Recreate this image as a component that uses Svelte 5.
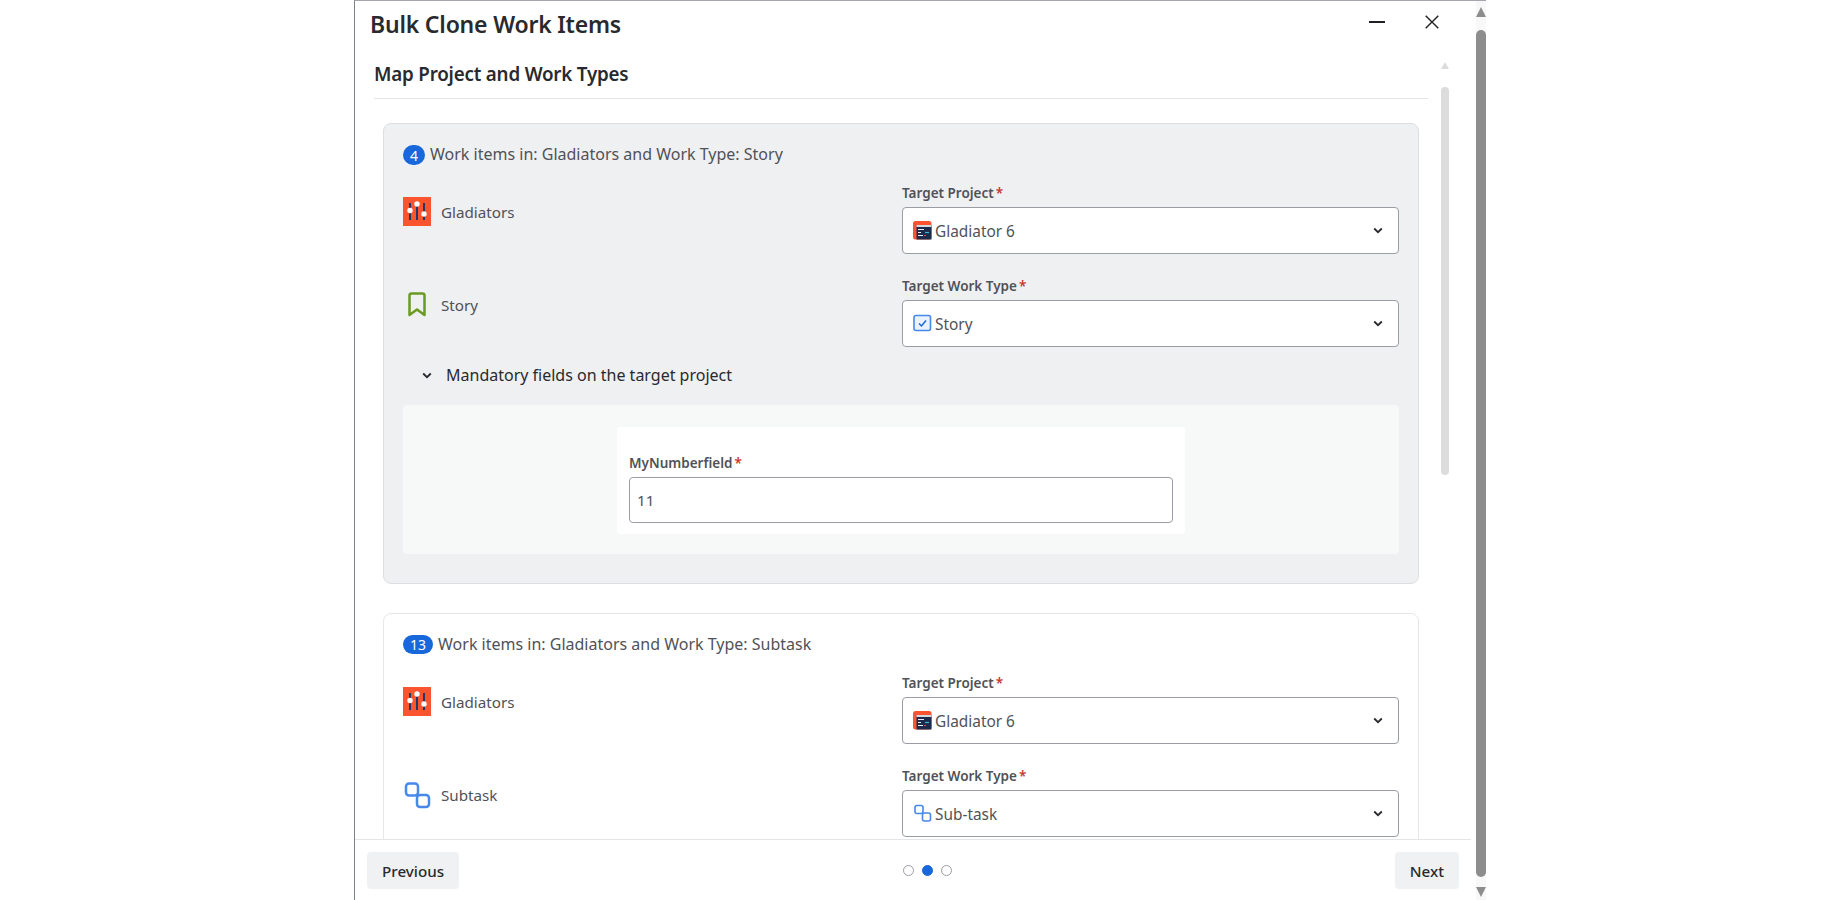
<script>
  const cards = [
    {
      count: 4,
      type: 'Story',
      typeIcon: 'bookmark',
      targetType: 'Story',
      targetIcon: 'check',
      active: true,
      mandatory: [{ label: 'MyNumberfield', value: '11' }]
    },
    {
      count: 13,
      type: 'Subtask',
      typeIcon: 'subtask',
      targetType: 'Sub-task',
      targetIcon: 'subtask',
      active: false,
      mandatory: []
    }
  ];
</script>

{#snippet sliders()}
  <svg class="icon-lg" viewBox="0 0 28 29">
    <rect width="28" height="29" fill="#fd5430" />
    <path d="M7 6v17M14 5v18M21 6v17" stroke="#22386b" stroke-width="2" />
    <circle cx="7" cy="13.500" r="2.700" fill="#fff" />
    <circle cx="14" cy="7" r="2.700" fill="#fff" />
    <circle cx="21" cy="17" r="2.700" fill="#fff" />
  </svg>
{/snippet}

{#snippet windowIcon()}
  <svg class="icon-sm" viewBox="0 0 19 19">
    <rect width="18.500" height="18.500" rx="2.500" fill="#fd5430" />
    <rect x="3.500" y="4" width="15" height="14.500" fill="#1c2b4d" />
    <rect x="3.500" y="4" width="15" height="2" fill="#d4d8df" />
    <path d="M5 8.500h6M5 11.500h3M5 14.500h5" stroke="#e8ecf2" stroke-width="1.200" />
    <path d="M12 11.500h4" stroke="#35b8d8" stroke-width="1.200" />
    <path d="M11 14.500h2" stroke="#e2483d" stroke-width="1.200" />
  </svg>
{/snippet}

{#snippet bookmark()}
  <svg class="icon-lg" viewBox="0 0 28 29">
    <path d="M6.500 5.500a2 2 0 0 1 2-2h11a2 2 0 0 1 2 2V25L14 19.500 6.500 25z" fill="none" stroke="#6a9a23" stroke-width="2.500" stroke-linejoin="round" />
  </svg>
{/snippet}

{#snippet subtaskLg()}
  <svg class="icon-lg" viewBox="0 0 28 29">
    <rect x="3" y="3.500" width="12" height="12" rx="3" fill="none" stroke="#4688ec" stroke-width="2.500" />
    <rect x="14" y="15" width="12" height="12" rx="3" fill="none" stroke="#4688ec" stroke-width="2.500" />
  </svg>
{/snippet}

{#snippet subtaskSm()}
  <svg class="icon-sm" viewBox="0 0 19 19">
    <rect x="2" y="1.500" width="8" height="8" rx="2" fill="none" stroke="#4688ec" stroke-width="1.600" />
    <rect x="9.500" y="9" width="8" height="8" rx="2" fill="none" stroke="#4688ec" stroke-width="1.600" />
  </svg>
{/snippet}

{#snippet checkSm()}
  <svg class="icon-sm" viewBox="0 0 19 19">
    <rect x="1" y="1.500" width="16.500" height="15" rx="2" fill="#e9f2fe" stroke="#4688ec" stroke-width="1.600" />
    <path d="M6 9.500l2.500 2.500 4.500-5.500" fill="none" stroke="#1868db" stroke-width="1.500" />
  </svg>
{/snippet}

{#snippet chevron(cls)}
  <svg class={cls} viewBox="0 0 10 7">
    <path d="M1.200 1.500L5 5.200l3.800-3.700" fill="none" stroke="#292a2e" stroke-width="1.800" />
  </svg>
{/snippet}

{#snippet select(icon, text)}
  <div class="select">
    {@render icon()}
    <span class="select-text">{text}</span>
    {@render chevron('select-chevron')}
  </div>
{/snippet}

{#snippet field(label)}
  <div class="field-label">{label}<span class="req">*</span></div>
{/snippet}

<div class="stage">
  <div class="dialog">
    <header class="top">
      <h1>Bulk Clone Work Items</h1>
      <div class="win-btns">
        <svg class="win-min" viewBox="0 0 16 2"><rect width="16" height="2" fill="#1f2023" /></svg>
        <svg class="win-close" viewBox="0 0 14 14"><path d="M.7.7l12.600 12.600M13.300.7L.7 13.300" stroke="#1f2023" stroke-width="1.400" /></svg>
      </div>
    </header>

    <div class="main">
      <div class="content">
        <h2>Map Project and Work Types</h2>

        {#each cards as card}
          <section class="card" class:active={card.active}>
            <div class="card-head">
              <span class="badge">{card.count}</span>
              <span class="head-text">Work items in: Gladiators and Work Type: {card.type}</span>
            </div>

            <div class="map-row">
              <div class="source">
                {@render sliders()}
                <span>Gladiators</span>
              </div>
              <div class="target">
                {@render field('Target Project')}
                {@render select(windowIcon, 'Gladiator 6')}
              </div>
            </div>

            <div class="map-row">
              <div class="source">
                {#if card.typeIcon === 'bookmark'}
                  {@render bookmark()}
                {:else}
                  {@render subtaskLg()}
                {/if}
                <span>{card.type}</span>
              </div>
              <div class="target">
                {@render field('Target Work Type')}
                {@render select(card.targetIcon === 'check' ? checkSm : subtaskSm, card.targetType)}
              </div>
            </div>

            {#if card.mandatory.length}
              <div class="mandatory-toggle">
                {@render chevron('toggle-chevron')}
                <span>Mandatory fields on the target project</span>
              </div>
              <div class="mandatory-panel">
                {#each card.mandatory as item}
                  <div class="mandatory-box">
                    {@render field(item.label)}
                    <div class="input">{item.value}</div>
                  </div>
                {/each}
              </div>
            {/if}
          </section>
        {/each}
      </div>

      <div class="inner-scroll">
        <span class="arrow-up"></span>
        <span class="inner-thumb"></span>
      </div>
    </div>

    <footer class="bottom">
      <button class="nav-btn">Previous</button>
      <div class="dots">
        <span class="dot"></span>
        <span class="dot on"></span>
        <span class="dot"></span>
      </div>
      <button class="nav-btn">Next</button>
    </footer>
  </div>

  <div class="page-scroll">
    <span class="page-up"></span>
    <span class="page-thumb"></span>
    <span class="page-down"></span>
  </div>
</div>

<style>
  :global(body) {
    margin: 0;
    background: #fff;
  }

  .stage {
    display: flex;
    height: 900px;
    padding-left: 354px;
    font-family: "Noto Sans", "Open Sans", sans-serif;
    color: #505258;
    overflow: hidden;
  }

  .dialog {
    width: 1121px;
    height: 899px;
    display: flex;
    flex-direction: column;
    border-left: 1px solid #7d8189;
    border-top: 1px solid #a3a6ac;
    background: #fff;
  }

  /* === Header === */
  .top {
    height: 47px;
    flex-shrink: 0;
    display: flex;
    align-items: center;
    justify-content: space-between;
    padding-left: 15px;
  }
  h1 {
    margin: -2px 0 0;
    font-size: 23px;
    font-weight: 600;
    color: #292a2e;
    letter-spacing: -0.2px;
  }
  .win-btns {
    display: flex;
    align-items: center;
    gap: 40px;
    margin-right: 37px;
    margin-top: -5px;
  }
  .win-min {
    width: 16px;
    height: 2px;
  }
  .win-close {
    width: 14px;
    height: 14px;
  }

  /* === Scrolling area === */
  .main {
    flex: 1;
    min-height: 0;
    display: flex;
    overflow: hidden;
  }
  .content {
    width: 1054px;
    margin-left: 19px;
    flex-shrink: 0;
  }
  h2 {
    margin: 0 0 24px;
    height: 50px;
    line-height: 52px;
    font-size: 18.800px;
    font-weight: 600;
    color: #292a2e;
    border-bottom: 1px solid #e3e5e8;
    box-sizing: content-box;
    letter-spacing: -0.2px;
  }

  .card {
    margin: 0 9px 29px 9px;
    padding: 21px 19px 29px 19px;
    border: 1px solid #e6e7e9;
    border-radius: 8px;
  }
  .card.active {
    background: #eff0f2;
    border-color: #dcdee1;
  }

  .card-head {
    display: flex;
    align-items: center;
    gap: 5px;
    height: 20px;
    font-size: 16px;
    margin-bottom: 19px;
  }
  .card:not(.active) .card-head {
    height: 19px;
    margin-bottom: 20px;
  }
  .head-text {
    margin-top: -2px;
  }
  .badge {
    min-width: 22px;
    height: 100%;
    padding: 0 7px;
    box-sizing: border-box;
    display: flex;
    align-items: center;
    justify-content: center;
    border-radius: 10px;
    background: #1868db;
    color: #fff;
    font-size: 14px;
  }

  .map-row {
    display: flex;
    justify-content: space-between;
    margin-bottom: 23px;
  }
  .source {
    display: flex;
    align-items: center;
    gap: 10px;
    height: 29px;
    margin-top: 13px;
    font-size: 15.200px;
  }
  .icon-lg {
    width: 28px;
    height: 29px;
    flex-shrink: 0;
  }
  .icon-sm {
    width: 19px;
    height: 19px;
    flex-shrink: 0;
  }

  .target {
    width: 497px;
  }
  .field-label {
    height: 18px;
    line-height: 18px;
    font-size: 13.500px;
    font-weight: 600;
    margin-bottom: 5px;
  }
  .req {
    color: #c9372c;
    margin-left: 2px;
  }

  .select {
    height: 47px;
    box-sizing: border-box;
    display: flex;
    align-items: center;
    gap: 3px;
    padding: 0 10px;
    background: #fff;
    border: 1px solid #9a9da4;
    border-radius: 4px;
    font-size: 15.400px;
  }
  .select-text {
    flex: 1;
    padding-top: 2px;
  }
  :global(.select-chevron) {
    width: 10px;
    height: 7px;
    margin-right: 5px;
  }

  /* === Mandatory fields === */
  .mandatory-toggle {
    display: flex;
    align-items: center;
    gap: 14px;
    height: 24px;
    margin: -7px 0 18px 19px;
    font-size: 16px;
    color: #292a2e;
  }
  :global(.toggle-chevron) {
    width: 10px;
    height: 7px;
  }
  .mandatory-panel {
    display: flex;
    justify-content: center;
    padding: 22px 0 20px;
    background: #f7f8f8;
    border-radius: 4px;
  }
  .mandatory-box {
    width: 568px;
    box-sizing: border-box;
    padding: 27px 12px 11px;
    background: #fff;
    border-radius: 4px;
  }
  .input {
    height: 46px;
    box-sizing: border-box;
    display: flex;
    align-items: center;
    padding-left: 7px;
    border: 1px solid #9a9da4;
    border-radius: 4px;
    font-size: 15.200px;
  }

  /* === Inner scrollbar === */
  .inner-scroll {
    margin-left: 12px;
    display: flex;
    flex-direction: column;
    align-items: center;
    width: 10px;
  }
  .arrow-up {
    margin-top: 14px;
    border-left: 4px solid transparent;
    border-right: 4px solid transparent;
    border-bottom: 7px solid #dcdcdc;
  }
  .inner-thumb {
    width: 8px;
    height: 388px;
    margin-top: 18px;
    border-radius: 4px;
    background: #dcdcdc;
  }

  /* === Footer === */
  .bottom {
    height: 61px;
    flex-shrink: 0;
    box-sizing: border-box;
    display: flex;
    align-items: flex-start;
    justify-content: space-between;
    padding: 12px 12px 0;
    margin-right: 5px;
    border-top: 1px solid #e3e5e8;
  }
  .nav-btn {
    height: 37px;
    padding: 0 15px;
    border: none;
    border-radius: 4px;
    background: #f0f1f2;
    color: #292a2e;
    font-family: inherit;
    font-size: 15.200px;
    font-weight: 500;
  }
  .dots {
    display: flex;
    align-items: center;
    gap: 8px;
    height: 37px;
    margin-left: 1px;
  }
  .dot {
    width: 11px;
    height: 11px;
    box-sizing: border-box;
    border-radius: 50%;
    border: 1px solid #9a9da4;
    background: #fff;
  }
  .dot.on {
    background: #1868db;
    border-color: #1868db;
  }

  /* === Page scrollbar === */
  .page-scroll {
    width: 10px;
    height: 899px;
    flex-shrink: 0;
    display: flex;
    flex-direction: column;
    align-items: center;
    border-top: 1px solid #a3a6ac;
    background: #f8f8f8;
  }
  .page-up {
    margin-top: 6px;
    border-left: 5px solid transparent;
    border-right: 5px solid transparent;
    border-bottom: 10px solid #8d8d8d;
  }
  .page-thumb {
    width: 10px;
    height: 847px;
    margin-top: 13px;
    border-radius: 5px;
    background: #8d8d8d;
  }
  .page-down {
    margin-top: 10px;
    border-left: 5px solid transparent;
    border-right: 5px solid transparent;
    border-top: 10px solid #8d8d8d;
  }
</style>
